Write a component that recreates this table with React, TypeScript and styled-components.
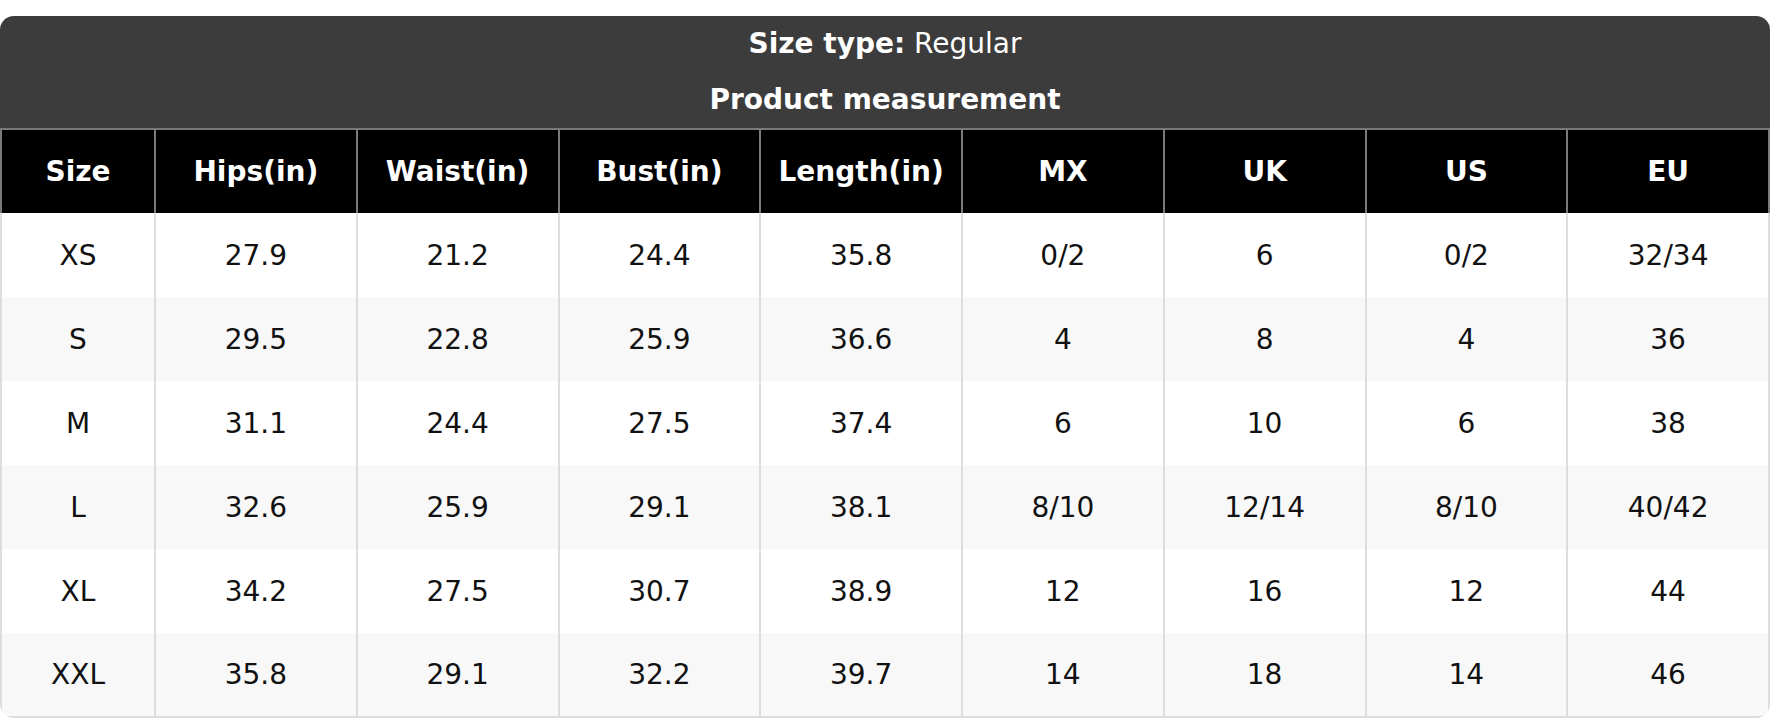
import React from 'react';
import styled, { createGlobalStyle } from 'styled-components';

const GlobalStyle = createGlobalStyle`
  html, body {
    margin: 0;
    padding: 0;
    background: #ffffff;
  }
  body {
    font-family: "DejaVu Sans", "Liberation Sans", sans-serif;
  }
`;

const columns = ['Size', 'Hips(in)', 'Waist(in)', 'Bust(in)', 'Length(in)', 'MX', 'UK', 'US', 'EU'];

const rows = [
  ['XS', '27.9', '21.2', '24.4', '35.8', '0/2', '6', '0/2', '32/34'],
  ['S', '29.5', '22.8', '25.9', '36.6', '4', '8', '4', '36'],
  ['M', '31.1', '24.4', '27.5', '37.4', '6', '10', '6', '38'],
  ['L', '32.6', '25.9', '29.1', '38.1', '8/10', '12/14', '8/10', '40/42'],
  ['XL', '34.2', '27.5', '30.7', '38.9', '12', '16', '12', '44'],
  ['XXL', '35.8', '29.1', '32.2', '39.7', '14', '18', '14', '46'],
];

const SizeChart = () => {
  return (
    <Page>
      <GlobalStyle />
      <ChartCard>
        <ChartHeader>
          <HeaderLine>
            <strong>Size type:</strong> Regular
          </HeaderLine>
          <HeaderLine>
            <strong>Product measurement</strong>
          </HeaderLine>
        </ChartHeader>
        <Table>
          <colgroup>
            <col style={{ width: 154 }} />
            {columns.slice(1).map((c) => (
              <col key={c} />
            ))}
          </colgroup>
          <thead>
            <HeadRow>
              {columns.map((c) => (
                <HeadCell key={c}>{c}</HeadCell>
              ))}
            </HeadRow>
          </thead>
          <tbody>
            {rows.map((row, i) => (
              <BodyRow key={row[0]} $striped={i % 2 === 1}>
                {row.map((v, j) => (
                  <BodyCell key={j}>{v}</BodyCell>
                ))}
              </BodyRow>
            ))}
          </tbody>
        </Table>
      </ChartCard>
    </Page>
  );
};

const Page = styled.div`
  padding-top: 16px;
  width: 1770px;
`;

const ChartCard = styled.div`
  border-radius: 14px;
  overflow: hidden;
  background: #ffffff;
`;

const ChartHeader = styled.div`
  background: #3c3c3c;
  color: #ffffff;
  text-align: center;
  border-bottom: 2px solid #7a7a7a;
`;

const HeaderLine = styled.div`
  font-size: 28px;
  line-height: 56px;
  font-weight: 400;

  strong {
    font-weight: 700;
  }
`;

const Table = styled.table`
  width: 100%;
  table-layout: fixed;
  border-collapse: collapse;
  font-size: 28px;
`;

const HeadRow = styled.tr`
  height: 83px;
  background: #000000;
`;

const HeadCell = styled.th`
  padding: 0;
  color: #ffffff;
  font-weight: 700;
  text-align: center;
  border-left: 2px solid #7a7a7a;
  border-right: 2px solid #7a7a7a;
`;

const BodyRow = styled.tr<{ $striped: boolean }>`
  height: 84px;
  background: ${({ $striped }) => ($striped ? '#f8f8f8' : '#ffffff')};

  &:last-child td {
    border-bottom: 2px solid #dddddd;
  }
`;

const BodyCell = styled.td`
  padding: 0;
  color: #111111;
  text-align: center;
  border-left: 2px solid #dddddd;
  border-right: 2px solid #dddddd;
`;

export default SizeChart;
